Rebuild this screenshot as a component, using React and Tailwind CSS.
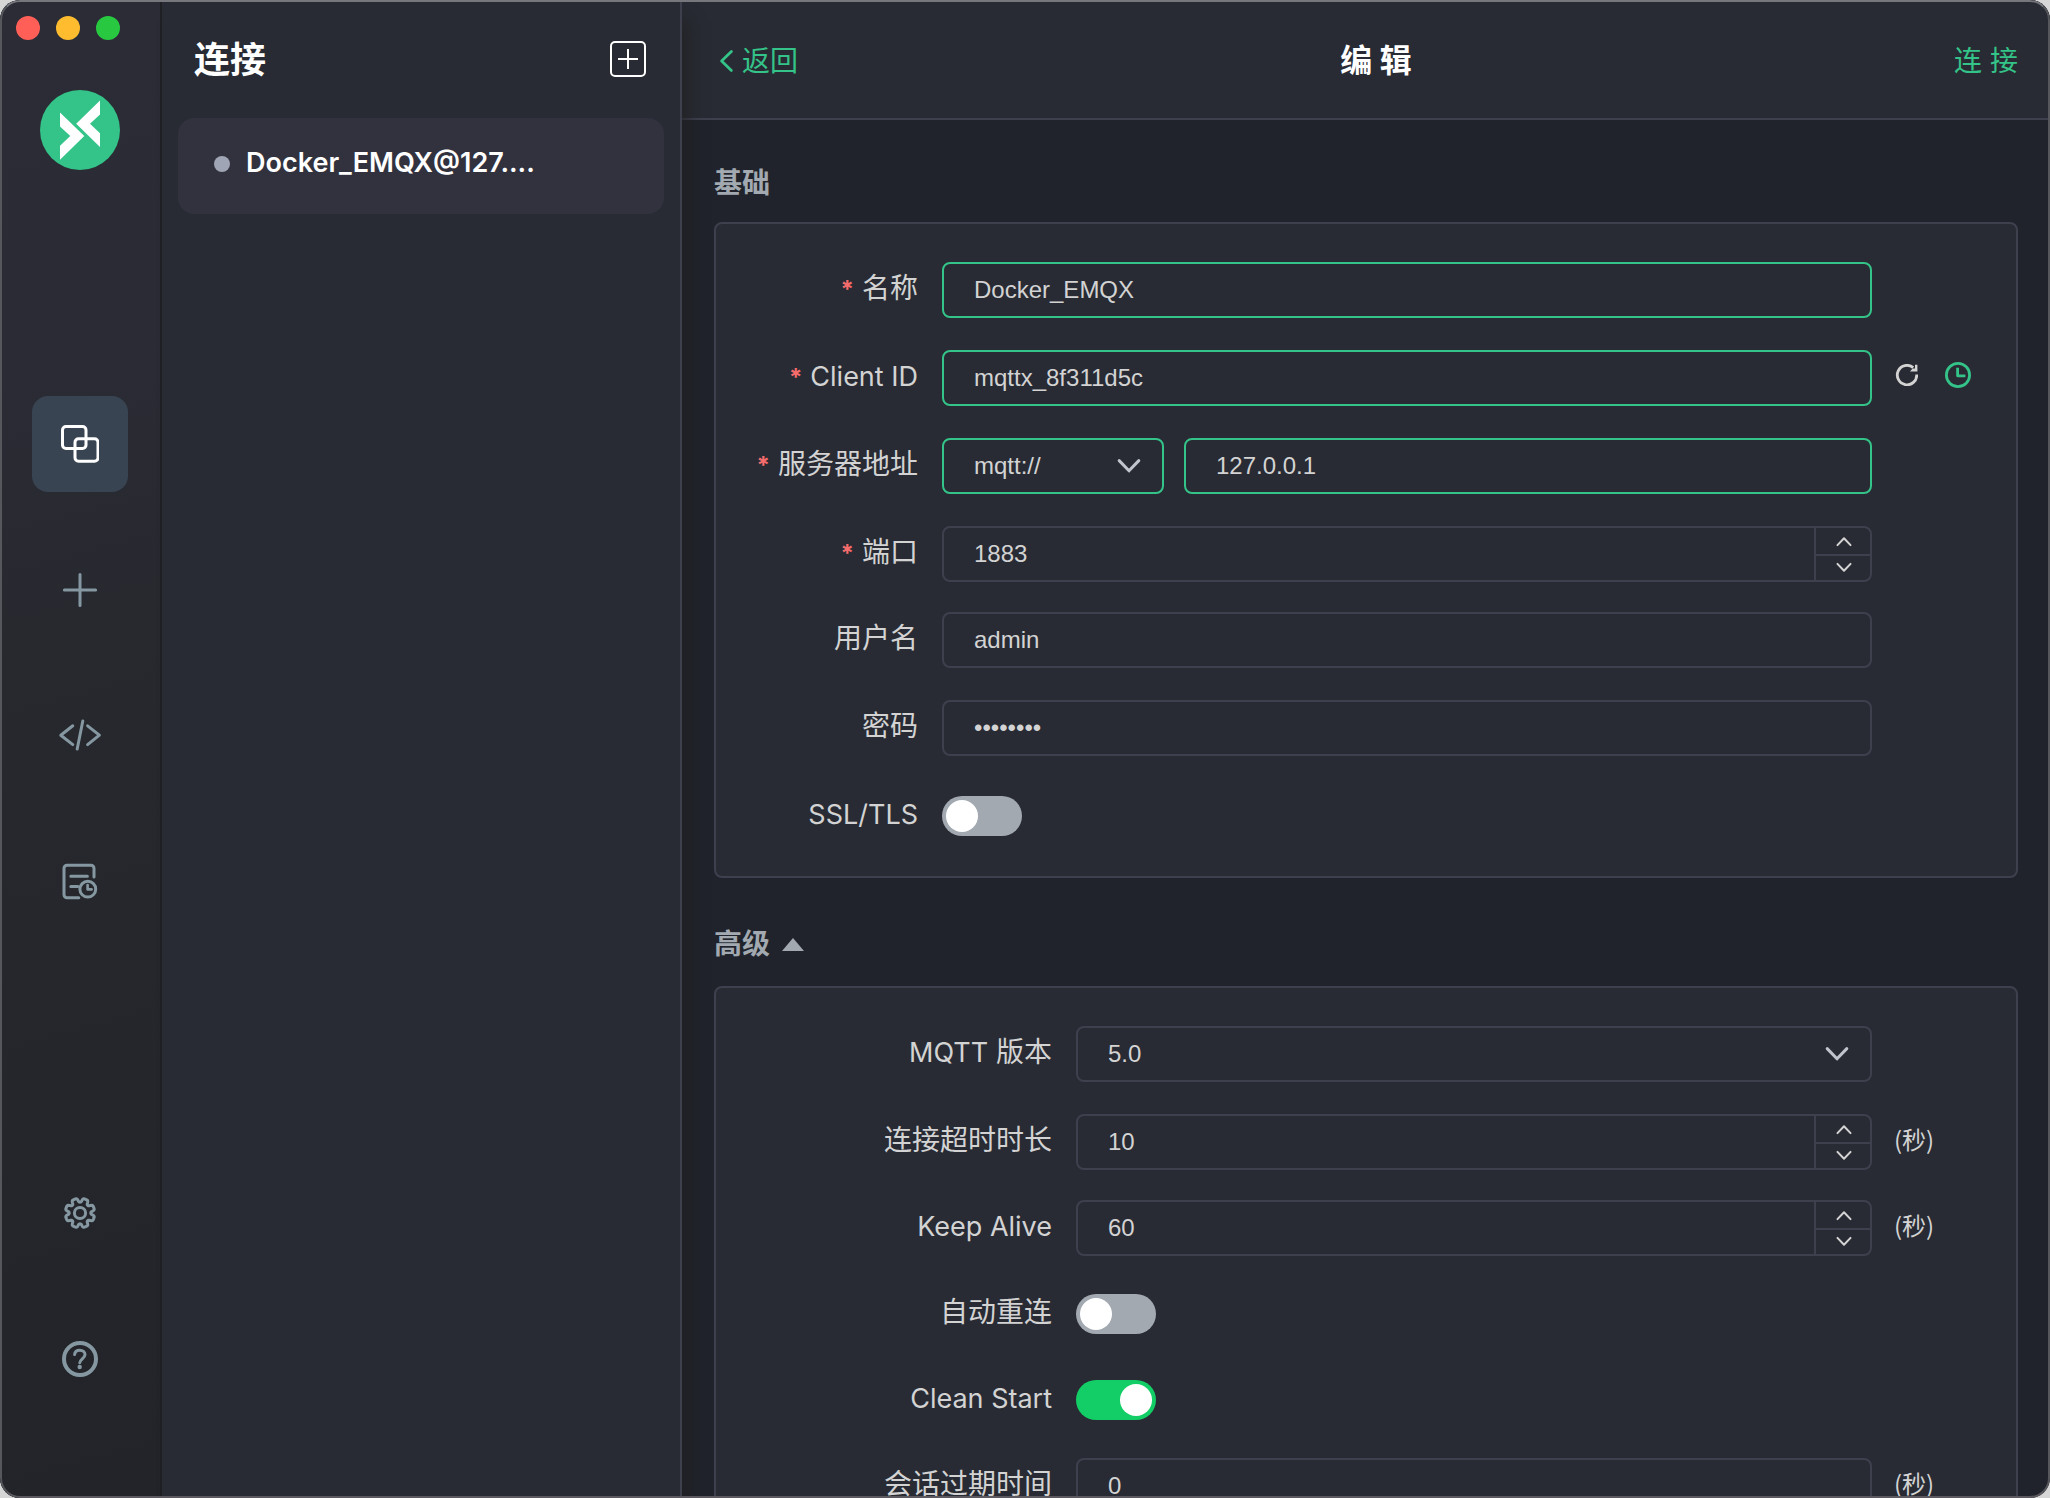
import { useState } from "react";

const FONT = "font-['Inter','Noto_Sans_CJK_SC',sans-serif]";
const INPUT_FONT = "font-['Liberation_Sans','Noto_Sans_CJK_SC',sans-serif]";

/* ---------- icons ---------- */

function Logo() {
  return (
    <svg viewBox="0 0 80 80" className="mt-[50px] size-20" role="img" aria-label="MQTTX">
      <circle cx="40" cy="40" r="40" fill="#34c388" />
      <path d="M20 22.6 44.3 46 20 69.8V55.7L30.3 46 20 36.6Z" fill="#fff" />
      <path d="M60 10.6 36.2 33.7 60 57V43.3L50 33.7 60 24.4Z" fill="#fff" />
    </svg>
  );
}

function ConnectionsIcon() {
  return (
    <svg viewBox="0 0 38 38" className="size-[38px]" fill="none" stroke="currentColor" strokeWidth="3">
      <rect x="1.5" y="1.5" width="23.5" height="22" rx="3.5" />
      <rect x="14" y="13.8" width="23" height="22.4" rx="3.5" />
    </svg>
  );
}

function PlusIcon() {
  return (
    <svg viewBox="0 0 36 36" className="size-9" fill="none" stroke="currentColor" strokeWidth="3" strokeLinecap="round">
      <path d="M18 2.4V33.6M2.4 18H33.6" />
    </svg>
  );
}

function CodeIcon() {
  return (
    <svg viewBox="0 0 44 36" className="h-9 w-11" fill="none" stroke="currentColor" strokeWidth="3" strokeLinecap="round" strokeLinejoin="round">
      <path d="M14.8 7.8 2.8 17.2 14.8 26.6M29.6 7.8 41.4 17.2 29.6 26.6M24.8 3 19.2 31" />
    </svg>
  );
}

function LogIcon() {
  return (
    <svg viewBox="1.6 0 38 38" className="size-[38px]" fill="none" stroke="currentColor" strokeWidth="3" strokeLinecap="round" strokeLinejoin="round">
      <path d="M34.6 14V5.2a3 3 0 0 0-3-3H7.6a3 3 0 0 0-3 3v26.6a3 3 0 0 0 3 3H19.4" />
      <path d="M11.4 13.2H28M11.4 23.4H18.4" />
      <circle cx="28.4" cy="26.2" r="7.9" />
      <path d="M28.2 22v4.4h4" strokeWidth="2.6" />
    </svg>
  );
}

function gearPath() {
  const points = [];
  for (let i = 0; i < 160; i += 1) {
    const a = (i / 160) * Math.PI * 2;
    const wave = Math.tanh(2.2 * (0.35 - Math.cos(8 * a)));
    const r = 12.7 + 2.1 * wave;
    points.push(`${(18 + r * Math.sin(a)).toFixed(2)} ${(18 - r * Math.cos(a)).toFixed(2)}`);
  }
  return `M${points.join("L")}Z`;
}

function GearIcon() {
  return (
    <svg viewBox="0 0 36 36" className="size-9" fill="none" stroke="currentColor" strokeWidth="3" strokeLinejoin="round">
      <path d={gearPath()} />
      <circle cx="18" cy="18" r="5.6" />
    </svg>
  );
}

function HelpIcon() {
  return (
    <svg viewBox="0 0 36 36" className="size-9" fill="none" stroke="currentColor" strokeLinecap="round" strokeLinejoin="round">
      <circle cx="18" cy="18" r="16" strokeWidth="4" />
      <path d="M12.6 13.6c.2-3 2.3-4.4 5.2-4.4 3 0 5.2 1.7 5.2 4.3 0 4-5.1 4.6-5.2 8.3" strokeWidth="3" />
      <circle cx="17.7" cy="26" r="2.2" fill="currentColor" stroke="none" />
    </svg>
  );
}

function BoxPlusIcon() {
  return (
    <svg viewBox="0 0 36 36" className="size-9" fill="none" stroke="currentColor" strokeWidth="2">
      <rect x="1" y="1" width="34" height="34" rx="4" />
      <path d="M18 8V28M8 18H28" />
    </svg>
  );
}

function BackIcon() {
  return (
    <svg viewBox="0 0 28 28" className="size-7" fill="none" stroke="currentColor" strokeWidth="2.8" strokeLinecap="round" strokeLinejoin="round">
      <path d="M17.4 4.4 7.6 14l9.8 9.4" />
    </svg>
  );
}

function ChevronIcon({ className }) {
  return (
    <svg viewBox="0 0 24 16" className={className} fill="none" stroke="currentColor" strokeLinecap="round" strokeLinejoin="round">
      <path d="M2.2 2.6 12 12.8 21.8 2.6" />
    </svg>
  );
}

function RefreshIcon() {
  return (
    <svg viewBox="-2 0 24 22" className="h-[22px] w-6" fill="none" stroke="currentColor" strokeWidth="2.8">
      <path d="M20.7 10.5A9.7 9.7 0 1 1 17.2 3.6" />
      <path d="M14 7.6 16.6 4.6 19 4.4V.8H21.4V7.6Z" fill="currentColor" stroke="none" />
    </svg>
  );
}

function ClockIcon() {
  return (
    <svg viewBox="0 0 26 26" className="size-[26px]" fill="none" stroke="currentColor" strokeWidth="2.8" strokeLinejoin="round">
      <circle cx="13" cy="13" r="11.6" />
      <path d="M12.6 5.8V13.8H20.4" />
    </svg>
  );
}

/* ---------- form parts ---------- */

const fieldBase = `${INPUT_FONT} h-14 w-full rounded-lg border-2 bg-transparent px-[30px] text-2xl text-[#d3d3d3] outline-none`;

function borderFor(active) {
  return active ? "border-[#34c388]" : "border-[#3e404e]";
}

function TextField({ active, ...props }) {
  return <input className={`${fieldBase} ${borderFor(active)}`} {...props} />;
}

function SelectField({ active, id, options, ...props }) {
  return (
    <div className="relative w-full">
      <select id={id} className={`${fieldBase} appearance-none ${borderFor(active)}`} {...props}>
        {options.map((o) => (
          <option key={o}>{o}</option>
        ))}
      </select>
      <ChevronIcon className="pointer-events-none absolute top-5 right-[23px] h-4 w-6 stroke-3 text-[#c0c4cc]" />
    </div>
  );
}

function NumberField({ id, initial }) {
  const [value, setValue] = useState(initial);
  return (
    <div className="flex h-14 w-full overflow-hidden rounded-lg border-2 border-[#3e404e]">
      <input
        id={id}
        type="number"
        value={value}
        onChange={(e) => setValue(Number(e.target.value))}
        className={`${INPUT_FONT} min-w-0 flex-1 bg-transparent px-[30px] text-2xl text-[#d3d3d3] outline-none [appearance:textfield] [&::-webkit-inner-spin-button]:appearance-none`}
      />
      <div className="flex w-14 flex-col border-l-2 border-[#3e404e] text-[#d3d3d3]">
        <button type="button" aria-label="+" onClick={() => setValue(value + 1)} className="flex h-7 items-center justify-center border-b-2 border-[#3e404e] pl-0.5">
          <ChevronIcon className="h-[11px] w-4 rotate-180 stroke-3" />
        </button>
        <button type="button" aria-label="-" onClick={() => setValue(value - 1)} className="flex h-6 items-center justify-center pb-0.5 pl-0.5">
          <ChevronIcon className="h-[11px] w-4 stroke-3" />
        </button>
      </div>
    </div>
  );
}

function Toggle({ id, on }) {
  return (
    <input
      id={id}
      type="checkbox"
      role="switch"
      defaultChecked={on}
      className="flex h-10 w-20 cursor-pointer appearance-none items-center rounded-full bg-[#a2a9b0] px-1 before:size-8 before:rounded-full before:bg-white before:content-[''] checked:justify-end checked:bg-[#13ce66]"
    />
  );
}

function Row({ id, label, required, wide, gap = "mb-8", suffix, children }) {
  return (
    <div className={`flex h-14 items-center ${gap}`}>
      <label
        htmlFor={id}
        className={`shrink-0 pr-6 pb-1 text-right text-[28px] leading-10 whitespace-nowrap text-[#d3d3d3] ${wide ? "w-[360px]" : "w-[226px]"}`}
      >
        {required && <span className="mr-2 text-2xl font-bold text-[#f56c6c]">*</span>}
        {label}
      </label>
      <div className="flex min-w-0 flex-1 items-center gap-5">{children}</div>
      <div className="flex w-36 shrink-0 items-center gap-[27px] pb-1.5 pl-[22px] text-2xl text-[#d3d3d3]">{suffix}</div>
    </div>
  );
}

function Latin({ children }) {
  return <span className="text-[27px]">{children}</span>;
}

function RailButton({ label, active, children }) {
  return (
    <button
      type="button"
      aria-label={label}
      className={`flex size-24 items-center justify-center rounded-2xl ${active ? "bg-[#394452] text-white" : "text-[#8598a2]"}`}
    >
      {children}
    </button>
  );
}

const SECONDS = <span className="font-['Noto_Sans_CJK_SC',sans-serif]">(秒)</span>;

/* ---------- page ---------- */

export default function App() {
  return (
    <div className="h-screen bg-[#d6d6d6]">
      <div className={`${FONT} relative flex h-full overflow-hidden rounded-[20px] bg-[#20232b]`}>
        <nav className="flex w-[162px] shrink-0 flex-col items-center border-r-2 border-[#1f2024] bg-[linear-gradient(165deg,#2b2c36,#2a2b34_25%,#26282d_50%,#232429)]">
          <div className="flex w-full gap-4 pt-4 pl-4">
            <span className="size-6 rounded-full bg-[#ff5f57]" />
            <span className="size-6 rounded-full bg-[#febc2e]" />
            <span className="size-6 rounded-full bg-[#28c840]" />
          </div>
          <Logo />
          <div className="mt-[226px] flex flex-col gap-[50px]">
            <RailButton label="连接" active><ConnectionsIcon /></RailButton>
            <RailButton label="新建"><PlusIcon /></RailButton>
            <RailButton label="脚本"><CodeIcon /></RailButton>
            <RailButton label="日志"><LogIcon /></RailButton>
          </div>
          <div className="mt-auto flex flex-col gap-[50px] pb-[91px]">
            <RailButton label="设置"><GearIcon /></RailButton>
            <RailButton label="帮助"><HelpIcon /></RailButton>
          </div>
        </nav>

        <aside className="z-10 flex w-[520px] shrink-0 flex-col border-r-2 border-[#3e404e] bg-[#282b33] shadow-[12px_14px_16px_-6px_rgba(31,31,31,0.7)]">
          <div className="flex h-[118px] items-center justify-between pr-[34px] pl-8 text-white">
            <h1 className="pt-0.5 text-4xl font-bold">连接</h1>
            <button type="button" aria-label="新建连接"><BoxPlusIcon /></button>
          </div>
          <a href="#connection" className="mx-4 flex h-24 items-center gap-4 rounded-2xl bg-[#31323e] px-9 pb-1 text-[27px] font-semibold text-white">
            <span className="size-4 shrink-0 rounded-full bg-[#a0a5b5]" />
            <span className="truncate pb-0.5">Docker_EMQX@127....</span>
          </a>
        </aside>

        <main className="flex min-w-0 flex-1 flex-col">
          <header className="flex h-[120px] shrink-0 items-center justify-between border-b-2 border-[#3e404e] bg-[#282b33] px-8 pt-1 text-[28px] text-[#34c388]">
            <button type="button" className="flex items-center"><BackIcon />返回</button>
            <h2 className="text-[32px] font-bold text-white">编 辑</h2>
            <button type="button">连 接</button>
          </header>

          <form className="min-h-0 flex-1 overflow-hidden px-8" onSubmit={(e) => e.preventDefault()}>
            <h3 className="flex h-[102px] items-center pt-6 text-[28px] font-bold text-[#a2a9b0]">基础</h3>
            <section className="rounded-lg border-2 border-[#3e404e] bg-[#282b33] pt-[38px]">
              <Row id="name" label="名称" required>
                <TextField id="name" active defaultValue="Docker_EMQX" />
              </Row>
              <Row
                id="client"
                label={<Latin>Client ID</Latin>}
                required
                suffix={
                  <>
                    <button type="button" aria-label="刷新"><RefreshIcon /></button>
                    <button type="button" aria-label="时间戳" className="text-[#34c388]"><ClockIcon /></button>
                  </>
                }
              >
                <TextField id="client" active defaultValue="mqttx_8f311d5c" />
              </Row>
              <Row id="host" label="服务器地址" required>
                <div className="w-[222px] shrink-0">
                  <SelectField id="scheme" active options={["mqtt://", "mqtts://", "ws://", "wss://"]} aria-label="协议" />
                </div>
                <TextField id="host" active defaultValue="127.0.0.1" />
              </Row>
              <Row id="port" label="端口" required gap="mb-[30px]">
                <NumberField id="port" initial={1883} />
              </Row>
              <Row id="user" label="用户名">
                <TextField id="user" defaultValue="admin" />
              </Row>
              <Row id="password" label="密码">
                <TextField id="password" type="password" defaultValue="password" />
              </Row>
              <Row id="ssl" label={<Latin>SSL/TLS</Latin>}>
                <Toggle id="ssl" />
              </Row>
            </section>

            <h3 className="flex h-[108px] items-center pt-6 text-[28px] font-bold text-[#a2a9b0]">
              <button type="button" className="flex items-center gap-3">
                高级
                <svg viewBox="0 0 22 13" className="h-[13px] w-[22px]" fill="currentColor"><path d="M11 0 22 13H0Z" /></svg>
              </button>
            </h3>
            <section className="rounded-lg border-2 border-[#3e404e] bg-[#282b33] pt-[38px]">
              <Row id="version" label={<><Latin>MQTT</Latin> 版本</>} wide>
                <SelectField id="version" options={["5.0", "3.1.1", "3.1"]} />
              </Row>
              <Row id="timeout" label="连接超时时长" wide gap="mb-[30px]" suffix={SECONDS}>
                <NumberField id="timeout" initial={10} />
              </Row>
              <Row id="keepalive" label={<Latin>Keep Alive</Latin>} wide gap="mb-[30px]" suffix={SECONDS}>
                <NumberField id="keepalive" initial={60} />
              </Row>
              <Row id="reconnect" label="自动重连" wide gap="mb-[30px]">
                <Toggle id="reconnect" />
              </Row>
              <Row id="clean" label={<Latin>Clean Start</Latin>} wide gap="mb-[30px]">
                <Toggle id="clean" on />
              </Row>
              <Row id="expiry" label="会话过期时间" wide suffix={SECONDS}>
                <TextField id="expiry" defaultValue="0" />
              </Row>
            </section>
          </form>
        </main>

        <div className="pointer-events-none absolute inset-0 z-20 rounded-[20px] border-2 border-[#55575c] border-t-[#75777c] border-b-[#5c5a60]" />
      </div>
    </div>
  );
}
